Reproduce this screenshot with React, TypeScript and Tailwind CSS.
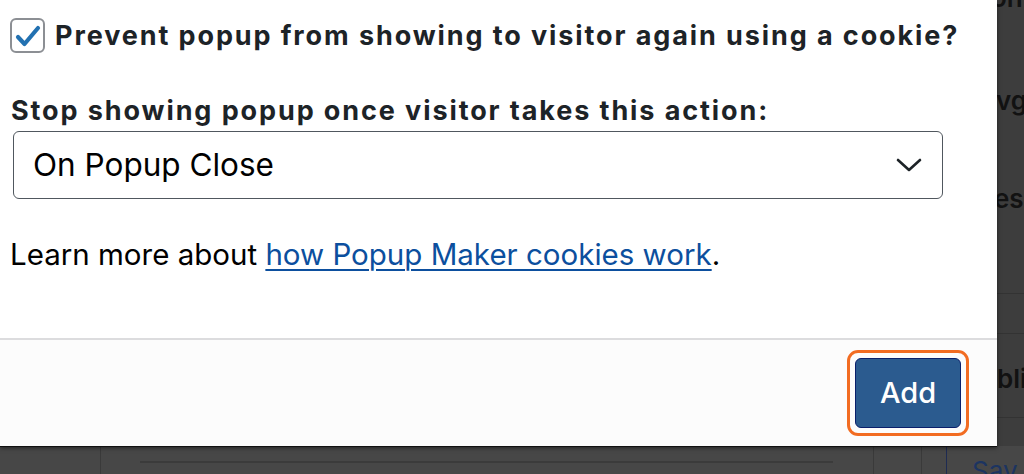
export default function App() {
  return (
    <div className="relative w-[1024px] h-[474px] overflow-hidden bg-[#474747] font-['Inter',sans-serif]">
      {/* darkened admin page behind the modal */}
      <div className="flex flex-col h-full">
        <div className="h-[446px] flex">
          <div className="w-[997px] shrink-0" />
          <div className="flex-1 overflow-hidden flex flex-col bg-[#3d3d3d] text-[#121212] text-[26px] font-semibold leading-[26px] whitespace-nowrap">
            <div className="-mt-[15px] h-[26px] -ml-[6px]">on</div>
            <div className="mt-[77px] h-[26px] -ml-[1px]">vg</div>
            <div className="mt-[72px] h-[26px] -ml-[3px]">es</div>
            <div className="mt-[81px] border-t border-[#333]" />
            <div className="mt-[39px] border-t border-[#333]" />
            <div className="mt-[32px] h-[26px]">bli</div>
            <div className="mt-[25px] border-t border-[#333]" />
          </div>
        </div>
        <div className="h-[28px] flex">
          <div className="w-[101px] border-r border-[#3a3a3a]" />
          <div className="w-[772px] pt-[15px] pl-[39px]">
            <div className="w-[693px] h-[2px] bg-[#3b3b3b]" />
          </div>
          <div className="w-[48px] border-l border-[#3a3a3a]" />
          <div className="w-[25px] border-l border-[#3a3a3a]" />
          <div className="flex-1 border-l border-[#1e2b52] pl-[25px] pt-[12px] text-[26px] leading-[26px] text-[#1c3461] whitespace-nowrap overflow-hidden">
            Sav
          </div>
        </div>
      </div>

      {/* modal */}
      <div className="absolute left-0 top-0 w-[997px] h-[446px] bg-white flex flex-col shadow-[0_1px_0_#111,0_2px_4px_rgba(0,0,0,0.5)] text-[#1d2327]">
        <div className="flex-1 px-[10px]">
          <label className="flex items-center gap-[10px] mt-[18px]">
            <span className="w-[35px] h-[35px] rounded-[6px] border-2 border-[#8c8f94] bg-white flex items-center justify-center">
              <svg width="26" height="22" viewBox="0 0 26 22">
                <path d="M3 12 L9.5 19 L23 3" fill="none" stroke="#2271b1" strokeWidth="4.2" strokeLinecap="round" strokeLinejoin="round" />
              </svg>
            </span>
            <span className="text-[27px] font-bold leading-[35px] tracking-[1.9px] whitespace-nowrap">
              Prevent popup from showing to visitor again using a cookie?
            </span>
          </label>

          <div className="mt-[42px] text-[27px] font-bold leading-[32px] tracking-[1.9px] pl-[1px] whitespace-nowrap">
            Stop showing popup once visitor takes this action:
          </div>

          <div className="mt-[4px] ml-[3px] w-[930px] h-[68px] rounded-[6px] border-[1.5px] border-[#50575e] flex items-center justify-between pl-[19px] pr-[20px]">
            <span className="text-[31.5px] text-black leading-none">On Popup Close</span>
            <svg width="26" height="16" viewBox="0 0 26 16">
              <path d="M2 3 L13 13 L24 3" fill="none" stroke="#1d2327" strokeWidth="2.6" strokeLinecap="round" strokeLinejoin="round" />
            </svg>
          </div>

          <p className="mt-[38px] text-[29.5px] text-black leading-[34px] whitespace-nowrap">
            Learn more about{' '}
            <a href="#" className="text-[#0c4f9e] underline underline-offset-[4px] decoration-[2px]">
              how Popup Maker cookies work
            </a>
            .
          </p>
        </div>

        <div className="h-[108px] border-t-2 border-[#dcdcde] bg-[#fcfcfc] flex items-center justify-end pr-[28px]">
          <div className="rounded-[11px] border-[3px] border-[#f26c22] p-[5px]">
            <button className="w-[106px] h-[70px] rounded-[6px] border border-[#0a1f6b] bg-[#2b5b8f] text-white text-[29px] font-medium">
              Add
            </button>
          </div>
        </div>
      </div>
    </div>
  );
}
